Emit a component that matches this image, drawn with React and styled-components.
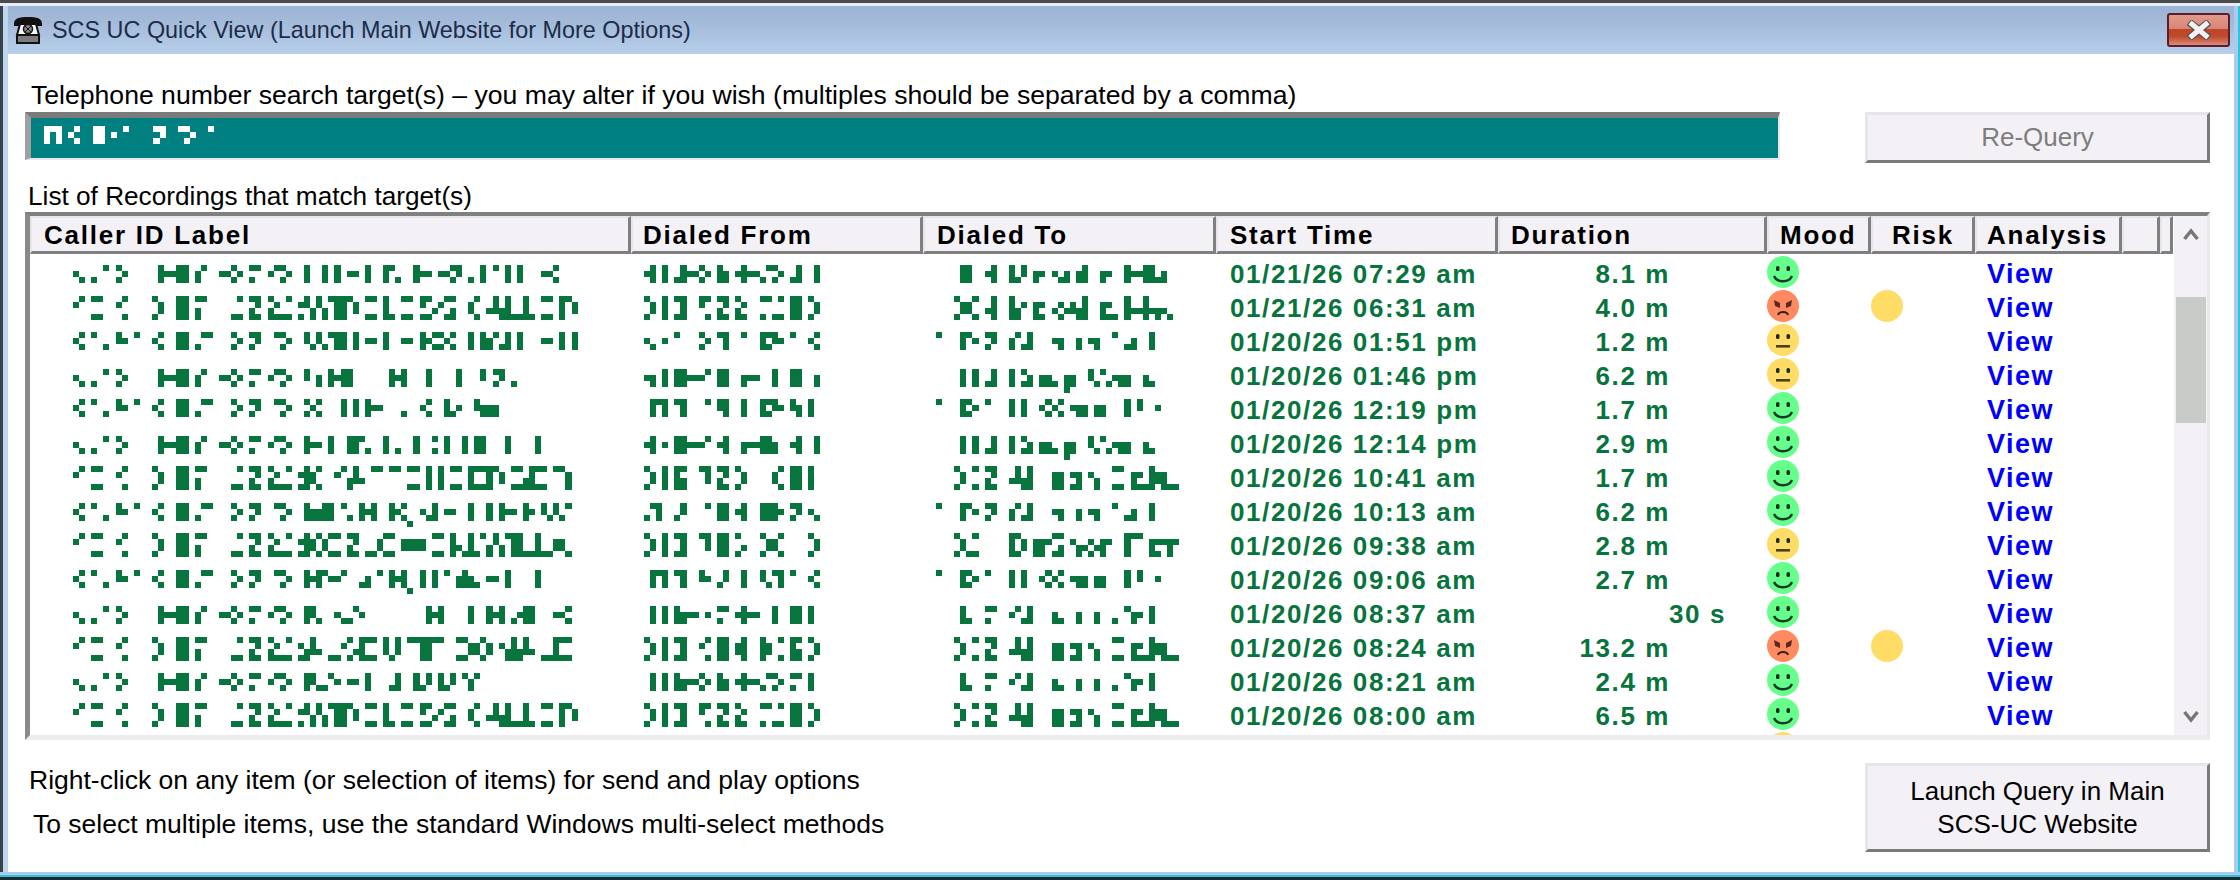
import React from "react";
import styled, { createGlobalStyle } from "styled-components";

const GlobalStyle = createGlobalStyle`
  html, body {
    margin: 0;
    padding: 0;
    background: #fff;
  }
  * {
    box-sizing: border-box;
  }
`;

const Page = styled.div`
  width: 2240px;
  height: 880px;
  overflow: hidden;
  display: flex;
  flex-direction: column;
  background: #fff;
  font-family: "Liberation Sans", Arial, sans-serif;
  color: #000;
`;

const TopEdge = styled.div`
  height: 6px;
  flex: none;
  border-top: 3px solid #4a4a4a;
  background: #e4eef8;
`;

const Frame = styled.div`
  flex: 1;
  min-height: 0;
  display: flex;
  flex-direction: column;
  border-left: 3px solid #39424a;
  border-right: 2px solid #2fc4dc;
`;

const Inner = styled.div`
  flex: 1;
  min-height: 0;
  display: flex;
  flex-direction: column;
  border-left: 5px solid #bcd6ee;
  border-right: 4px solid #a9cde9;
`;

const TitleBar = styled.div`
  height: 48px;
  flex: none;
  display: flex;
  align-items: center;
  padding: 0 4px 0 4px;
  background: linear-gradient(#9cb4d3 0%, #a3bbd9 35%, #b7cfea 100%);
`;

const TitleText = styled.span`
  margin-left: 8px;
  font-size: 23.4px;
  color: #1d2b4a;
  white-space: nowrap;
`;

const CloseButton = styled.div`
  margin-left: auto;
  width: 63px;
  height: 34px;
  display: flex;
  align-items: center;
  justify-content: center;
  border: 2px solid #5b1e2e;
  border-radius: 3px;
  background: linear-gradient(#e39a8a 0%, #d9857a 45%, #bf4526 46%, #c04a2c 72%, #d98c78 100%);
`;

const Body = styled.div`
  flex: 1;
  min-height: 0;
  display: flex;
  flex-direction: column;
  padding: 26px 24px 0 17px;
`;

const FieldLabel = styled.div`
  height: 32px;
  line-height: 30px;
  padding-left: 6px;
  font-size: 26.6px;
  white-space: nowrap;
`;

const SearchRow = styled.div`
  display: flex;
  justify-content: space-between;
  align-items: flex-start;
`;

const SearchField = styled.div`
  position: relative;
  width: 1755px;
  height: 48px;
  background: #008080;
  border-top: 6px solid #7b7b7b;
  border-left: 6px solid #a0a0a0;
  border-bottom: 2px solid #e9e7e9;
  border-right: 2px solid #e9e7e9;
  padding: 8px 0 0 13px;
`;

const Button = styled.div`
  width: 345px;
  display: flex;
  align-items: center;
  justify-content: center;
  text-align: center;
  background: #f4f1f6;
  border-top: 3px solid #e8e5ea;
  border-left: 3px solid #e8e5ea;
  border-right: 3px solid #7a7a7a;
  border-bottom: 3px solid #7a7a7a;
  height: ${({ $height }) => $height}px;
  color: ${({ $disabled }) => ($disabled ? "#7d7d7d" : "#000")};
  font-size: 26px;
  line-height: 33px;
`;

const ListLabel = styled.div`
  margin-top: 20px;
  height: 29px;
  line-height: 27px;
  padding-left: 3px;
  font-size: 26.2px;
  white-space: nowrap;
`;

const Table = styled.div`
  height: 528px;
  flex: none;
  display: flex;
  border-top: 4px solid #808080;
  border-left: 5px solid #8a8a8a;
  border-right: 3px solid #e9e7e9;
  border-bottom: 5px solid #efecef;
  margin-left: 0;
`;

const TableMain = styled.div`
  flex: 1;
  min-width: 0;
  height: 519px;
  overflow: hidden;
`;

const COLUMNS = "601px 292px 293px 282px 269px 104px 104px 147px 38px 13px";

const HeaderRow = styled.div`
  display: grid;
  grid-template-columns: ${COLUMNS};
  height: 38px;
  margin-bottom: 3px;
`;

const HeaderCell = styled.div`
  background: #f4f1f6;
  border-top: 2px solid #e8e5ea;
  border-left: 2px solid #e8e5ea;
  border-right: 3px solid #7f7f7f;
  border-bottom: 3px solid #7f7f7f;
  padding-left: ${({ $pad }) => $pad}px;
  font-size: 26px;
  font-weight: 700;
  letter-spacing: 1.75px;
  line-height: 35px;
  white-space: nowrap;
  overflow: hidden;
`;

const Row = styled.div`
  display: grid;
  grid-template-columns: ${COLUMNS};
  height: 34px;
`;

const MosaicCell = styled.div`
  padding-left: ${({ $pad }) => $pad}px;
  padding-top: ${({ $top }) => $top}px;
`;

const TimeCell = styled.div`
  padding-left: 14px;
  font-size: 26px;
  font-weight: 700;
  letter-spacing: 1.6px;
  line-height: 34px;
  color: #07733d;
  white-space: nowrap;
`;

const DurationCell = styled.div`
  padding-right: ${({ $pad }) => $pad}px;
  text-align: right;
  font-size: 26px;
  font-weight: 700;
  letter-spacing: 1.6px;
  line-height: 34px;
  color: #07733d;
  white-space: nowrap;
`;

const IconCell = styled.div`
  margin-top: -1px;
  height: 32px;
`;

const RiskDot = styled.div`
  width: 32px;
  height: 32px;
  border-radius: 50%;
  background: #ffdc66;
`;

const ViewLink = styled.div`
  padding-left: 12px;
  font-size: 27px;
  font-weight: 700;
  letter-spacing: 1.5px;
  line-height: 34px;
  color: #0000ff;
`;

const ScrollBar = styled.div`
  width: 33px;
  flex: none;
  display: flex;
  flex-direction: column;
  align-items: center;
  background: #f4f1f6;
  height: 519px;
  padding-top: 12px;
`;

const ScrollThumb = styled.div`
  width: 30px;
  height: 126px;
  margin-top: 56px;
  background: #c9cbc9;
`;

const ScrollDown = styled.div`
  margin-top: auto;
  margin-bottom: 12px;
`;

const Footer = styled.div`
  display: flex;
  justify-content: space-between;
  align-items: flex-start;
  margin-top: 23px;
`;

const Notes = styled.div`
  display: flex;
  flex-direction: column;
  gap: 14px;
  padding-left: 4px;
  padding-top: 2px;
`;

const Note = styled.div`
  font-size: 26.5px;
  line-height: 30px;
  padding-left: ${({ $pad }) => $pad || 0}px;
  white-space: nowrap;
`;

const BottomEdge = styled.div`
  height: 8px;
  flex: none;
  border-top: 3px solid #a9cde9;
  border-bottom: 3px solid #1b2a30;
  background: #2fc4dc;
`;

// redaction blocks: one hex digit per column, bit 1 is the top cell
const Mosaic = ({ data, color = "#07753d", cell = 6.08 }) => {
  const rects = [];
  [...data].forEach((ch, col) => {
    const bits = parseInt(ch, 16);
    for (let bit = 0; bit < 4; bit++) {
      if (bits & (1 << bit)) {
        rects.push(
          <rect key={`${col}-${bit}`} x={col * cell} y={bit * 6} width={cell} height={6} fill={color} />
        );
      }
    }
  });
  return (
    <svg width={data.length * cell} height={24} shapeRendering="crispEdges" style={{ display: "block" }}>
      {rects}
    </svg>
  );
};

const PhoneIcon = () => (
  <svg width="32" height="28" viewBox="0 0 32 28">
    <path d="M2 8 C2 2 7 1 16 1 C25 1 30 2 30 8 L30 10 L24 10 L24 7 L8 7 L8 10 L2 10 Z" fill="#111" />
    <path d="M8 8 L24 8 L27 19 L5 19 Z" fill="#f4f4f4" stroke="#111" strokeWidth="2" />
    <circle cx="16" cy="13" r="4.5" fill="#888" stroke="#111" strokeWidth="1.5" />
    <path d="M13 10 L19 16 M19 10 L13 16" stroke="#111" strokeWidth="1" />
    <rect x="5" y="19" width="22" height="8" fill="#7c7c7c" stroke="#111" strokeWidth="2" />
  </svg>
);

const CloseIcon = () => (
  <svg width="24" height="20" viewBox="0 0 24 20">
    <path d="M2 2 L22 18 M22 2 L2 18" stroke="#555" strokeWidth="7.5" />
    <path d="M3 2.5 L21 17.5 M21 2.5 L3 17.5" stroke="#f3f1f1" strokeWidth="5" />
  </svg>
);

const MOOD_COLORS = { good: "#66ff8c", neutral: "#ffdc66", bad: "#ff8a60" };

const MoodFace = ({ mood }) => (
  <svg width="32" height="32" viewBox="0 0 32 32" style={{ display: "block" }}>
    <circle cx="16" cy="16" r="16" fill={MOOD_COLORS[mood]} />
    {mood === "bad" ? (
      <>
        <path d="M7 10 L13 13 L13 18 L8 16 Z M25 10 L19 13 L19 18 L24 16 Z" fill="#5a2a22" />
        <path d="M11 25 C12 21 20 21 21 25" fill="none" stroke="#33201c" strokeWidth="2" />
      </>
    ) : (
      <>
        <rect x="9" y="10" width="3.5" height="5" rx="1.5" fill="#1c2b22" />
        <rect x="19.5" y="10" width="3.5" height="5" rx="1.5" fill="#1c2b22" />
        {mood === "good" ? (
          <path d="M7 20 C10 27 22 27 25 20" fill="none" stroke="#1c3a28" strokeWidth="2.4" />
        ) : (
          <rect x="9" y="21" width="14" height="2.6" fill="#4b3f1e" />
        )}
      </>
    )}
  </svg>
);

const ChevronUp = () => (
  <svg width="16" height="13" viewBox="0 0 16 13" style={{ display: "block" }}>
    <path d="M1.5 11 L8 3 L14.5 11" fill="none" stroke="#777" strokeWidth="3.5" />
  </svg>
);

const ChevronDown = () => (
  <svg width="16" height="13" viewBox="0 0 16 13" style={{ display: "block" }}>
    <path d="M1.5 2 L8 10 L14.5 2" fill="none" stroke="#777" strokeWidth="3.5" />
  </svg>
);

const HEADERS = [
  ["Caller ID Label", 12],
  ["Dialed From", 10],
  ["Dialed To", 12],
  ["Start Time", 12],
  ["Duration", 11],
  ["Mood", 11],
  ["Risk", 19],
  ["Analysis", 10],
  ["", 0],
  ["", 0],
];

const PRE_A = "240401052" + "00000" + "72277" + "0" + "61" + "00" + "2252" + "0" + "51" + "0" + "2152" + "00";
const PRE_B = "210990029" + "0000" + "96" + "00" + "FF" + "0" + "D1" + "0000" + "89" + "0" + "DB" + "0" + "DA89" + "0";
const PRE_C = "250104032" + "01" + "00" + "25" + "00" + "77" + "0" + "411" + "000" + "52" + "0" + "53" + "00" + "152" + "00";

const TAIL_B =
  "A3C3C1FF16" + "0" + "99" + "0" + "F8" + "0" + "99" + "0" + "B9429D" + "00" + "69" + "0" + "47CF88F8" + "0" + "99" + "0" + "F16";

const FROM_MAIN = "96" + "0" + "F" + "0" + "9F" + "00" + "39" + "0" + "DB" + "0" + "DA" + "00" + "9189" + "0" + "FF" + "0" + "96";
const TO_SALES = "0000" + "7" + "0" + "7" + "0" + "47" + "00" + "7" + "0" + "56" + "0" + "664" + "0" + "E6" + "00" + "3414" + "266" + "00" + "64";
const TO_B = "000" + "96" + "0" + "9" + "0" + "DB" + "00" + "47CF" + "000" + "EE" + "0" + "AE" + "0" + "2C" + "00" + "99" + "0" + "EA8F6E88";
const TO_C = "1" + "000" + "712" + "0" + "53" + "00" + "61" + "47" + "000" + "26" + "00" + "6" + "0" + "26" + "00" + "1" + "0" + "46" + "00" + "7";
const TO_D = "1" + "000" + "752" + "0" + "1" + "000" + "7" + "0" + "7" + "00" + "2525" + "0" + "266" + "0" + "66" + "000" + "7" + "0" + "3" + "00" + "2";
const TO_E = "0000" + "74" + "00" + "51" + "00" + "2147" + "000" + "64" + "00" + "6" + "00" + "6" + "00" + "4" + "0" + "162" + "0" + "7";

const ROWS = [
  {
    top: 8,
    label: PRE_A + "7007070220700714" + "00" + "722" + "0" + "2253" + "0" + "4" + "0" + "7" + "0" + "1" + "0" + "7" + "0" + "7" + "000" + "225",
    from: "27070472252" + "0" + "76" + "0" + "27224152" + "0" + "47" + "00" + "7",
    to: "0000" + "77" + "00" + "27" + "00" + "743" + "0" + "62" + "0" + "246" + "0" + "67" + "00" + "62" + "00" + "72277" + "46",
    start: "01/21/26 07:29 am",
    dur: "8.1 m",
    mood: "good",
  },
  {
    top: 5,
    label: PRE_B + TAIL_B,
    from: FROM_MAIN,
    to: "000" + "9669" + "0" + "4F" + "00" + "FC2" + "0" + "EA" + "0" + "4A46CF" + "00" + "EA8" + "0" + "F44F4C48",
    start: "01/21/26 06:31 am",
    dur: "4.0 m",
    mood: "bad",
    risk: true,
  },
  {
    top: 7,
    label: PRE_C + "3434" + "177" + "0" + "7" + "0" + "22" + "0" + "7" + "00" + "22" + "0" + "72" + "55" + "2" + "5" + "00" + "7" + "0" + "76" + "1" + "47" + "0" + "7" + "000" + "22" + "0" + "7" + "0" + "7",
    from: "24" + "0" + "2" + "0" + "1" + "000" + "52" + "0" + "17" + "00" + "1" + "00" + "7532" + "0" + "1" + "00" + "25",
    to: TO_C,
    start: "01/20/26 01:51 pm",
    dur: "1.2 m",
    mood: "neutral",
  },
  {
    top: 10,
    label: PRE_A + "3" + "0" + "6" + "0" + "7" + "2" + "77" + "000000" + "727" + "000" + "7" + "0000" + "7" + "000" + "3" + "0" + "53" + "0" + "4",
    from: "26" + "0" + "7" + "0" + "77" + "222" + "1" + "0" + "77" + "00" + "6" + "22" + "00" + "7" + "00" + "77" + "00" + "6",
    to: TO_SALES,
    start: "01/20/26 01:46 pm",
    dur: "6.2 m",
    mood: "neutral",
  },
  {
    top: 6,
    label: PRE_C + "525" + "000" + "7" + "0" + "7" + "0" + "722" + "000" + "4" + "00" + "25" + "00" + "742" + "00" + "3666",
    from: "0717" + "0" + "17" + "000" + "1" + "0" + "37" + "00" + "7" + "00" + "7532" + "0" + "36" + "0" + "7",
    to: TO_D,
    start: "01/20/26 12:19 pm",
    dur: "1.7 m",
    mood: "good",
  },
  {
    top: 9,
    label: PRE_A + "722" + "0" + "7" + "00" + "77" + "1" + "4" + "00" + "7" + "0" + "4" + "00" + "7" + "00" + "5" + "0" + "7" + "00" + "7" + "0" + "77" + "000" + "7" + "0000" + "7",
    from: "27" + "0" + "2" + "0" + "77" + "222" + "1" + "0" + "27" + "00" + "6" + "22" + "776" + "00" + "27" + "00" + "7",
    to: TO_SALES,
    start: "01/20/26 12:14 pm",
    dur: "2.9 m",
    mood: "good",
  },
  {
    top: 5,
    label: PRE_B + "AF69" + "00" + "21" + "C74" + "0" + "11" + "0" + "11" + "0" + "99" + "0" + "F" + "0" + "F" + "0" + "99" + "0" + "F99F" + "16" + "0" + "99" + "CF99" + "0" + "11" + "E",
    from: "96" + "0" + "F" + "0" + "FD" + "00" + "17" + "0" + "DB" + "0" + "96" + "0000" + "69" + "0" + "FF" + "0" + "F",
    to: TO_B,
    start: "01/20/26 10:41 am",
    dur: "1.7 m",
    mood: "good",
  },
  {
    top: 8,
    label: PRE_C + "76677" + "0" + "14" + "0" + "727" + "00" + "7258" + "0" + "247" + "0" + "22" + "00" + "7" + "00" + "7" + "0" + "722" + "0" + "72" + "0" + "34341",
    from: "417" + "00" + "43" + "000" + "1" + "0" + "77" + "0" + "27" + "00" + "7772" + "0" + "53" + "0" + "24",
    to: TO_C,
    start: "01/20/26 10:13 am",
    dur: "6.2 m",
    mood: "good",
  },
  {
    top: 4,
    label: PRE_B + "AF69699" + "0" + "DB" + "0" + "88699" + "0" + "6666" + "0" + "99" + "0" + "F48F81C3C1FF88F88668",
    from: "96" + "0" + "F" + "0" + "9F" + "00" + "17" + "0" + "FF" + "0" + "94" + "00" + "9669" + "0000" + "96",
    to: "000" + "9689" + "00000" + "F96" + "0" + "EE29D" + "0" + "2C4A4E2" + "00" + "F11" + "0" + "EA2E2",
    start: "01/20/26 09:38 am",
    dur: "2.8 m",
    mood: "neutral",
  },
  {
    top: 7,
    label: PRE_C + "7271221" + "00" + "46" + "0" + "1" + "0" + "7278" + "0" + "7" + "0" + "7" + "0" + "1" + "0" + "6764" + "0" + "22" + "0" + "7" + "0000" + "7",
    from: "0717" + "0" + "17" + "00" + "32" + "0" + "43" + "00" + "7" + "00" + "3417" + "0" + "1" + "00" + "25",
    to: TO_D,
    start: "01/20/26 09:06 am",
    dur: "2.7 m",
    mood: "good",
  },
  {
    top: 9,
    label: PRE_A + "734" + "00" + "2" + "44" + "12" + "0000000000" + "727" + "0000" + "7" + "00" + "727" + "0" + "4277" + "000" + "225",
    from: "0707" + "0" + "7622" + "0" + "2" + "0" + "51" + "0" + "27" + "22" + "00" + "7" + "00" + "77" + "0" + "7",
    to: TO_E,
    start: "01/20/26 08:37 am",
    dur: "30 s",
    mood: "good",
  },
  {
    top: 6,
    label: PRE_B + "AC74" + "0" + "88294F99" + "0" + "787" + "0" + "11FF11" + "00" + "996696" + "0" + "2CFC74" + "0" + "88F99",
    from: "96" + "0" + "F" + "0" + "9F" + "00" + "29" + "0" + "FF" + "0" + "6F" + "00" + "F6" + "0" + "9" + "0" + "FD" + "0" + "96",
    to: TO_B,
    start: "01/20/26 08:24 am",
    dur: "13.2 m",
    mood: "bad",
    risk: true,
  },
  {
    top: 8,
    label: PRE_A + "734412" + "0" + "22" + "0" + "7" + "000" + "47" + "00" + "743" + "0" + "743" + "0" + "161",
    from: "0707" + "0" + "76225" + "2" + "0" + "76" + "0" + "2722" + "4152" + "0" + "51" + "0" + "7",
    to: TO_E,
    start: "01/20/26 08:21 am",
    dur: "2.4 m",
    mood: "good",
  },
  {
    top: 4,
    label: PRE_B + TAIL_B,
    from: FROM_MAIN,
    to: TO_B,
    start: "01/20/26 08:00 am",
    dur: "6.5 m",
    mood: "good",
  },
];

const App = () => {
  return (
    <Page>
      <GlobalStyle />
      <TopEdge />
      <Frame>
        <Inner>
          <TitleBar>
            <PhoneIcon />
            <TitleText>SCS UC Quick View (Launch Main Website for More Options)</TitleText>
            <CloseButton>
              <CloseIcon />
            </CloseButton>
          </TitleBar>
          <Body>
            <FieldLabel>
              Telephone number search target(s) – you may alter if you wish (multiples should be separated by a comma)
            </FieldLabel>
            <SearchRow>
              <SearchField>
                <Mosaic data={"717" + "0" + "25" + "00" + "77" + "0" + "2" + "0" + "1" + "0000" + "53" + "00" + "152" + "00" + "1"} color="#fff" />
              </SearchField>
              <Button $height={51} $disabled>Re-Query</Button>
            </SearchRow>
            <ListLabel>List of Recordings that match target(s)</ListLabel>
            <Table>
              <TableMain>
                <HeaderRow>
                  {HEADERS.map(([title, pad], i) => (
                    <HeaderCell key={i} $pad={pad}>{title}</HeaderCell>
                  ))}
                </HeaderRow>
                {ROWS.map((row, i) => (
                  <Row key={i}>
                    <MosaicCell $pad={43} $top={row.top}><Mosaic data={row.label} /></MosaicCell>
                    <MosaicCell $pad={13} $top={row.top}><Mosaic data={row.from} /></MosaicCell>
                    <MosaicCell $pad={13} $top={row.top}><Mosaic data={row.to} /></MosaicCell>
                    <TimeCell>{row.start}</TimeCell>
                    <DurationCell $pad={row.dur.endsWith("s") ? 41 : 97}>{row.dur}</DurationCell>
                    <IconCell><MoodFace mood={row.mood} /></IconCell>
                    <IconCell>{row.risk && <RiskDot />}</IconCell>
                    <ViewLink>View</ViewLink>
                  </Row>
                ))}
                {/* next row, only the top of its mood icon is visible */}
                <Row>
                  <div />
                  <div />
                  <div />
                  <div />
                  <div />
                  <IconCell><MoodFace mood="neutral" /></IconCell>
                </Row>
              </TableMain>
              <ScrollBar>
                <ChevronUp />
                <ScrollThumb />
                <ScrollDown>
                  <ChevronDown />
                </ScrollDown>
              </ScrollBar>
            </Table>
            <Footer>
              <Notes>
                <Note>Right-click on any item (or selection of items) for send and play options</Note>
                <Note $pad={4}>To select multiple items, use the standard Windows multi-select methods</Note>
              </Notes>
              <Button $height={89}>
                <div>
                  Launch Query in Main
                  <br />
                  SCS-UC Website
                </div>
              </Button>
            </Footer>
          </Body>
        </Inner>
      </Frame>
      <BottomEdge />
    </Page>
  );
};

export default App;
